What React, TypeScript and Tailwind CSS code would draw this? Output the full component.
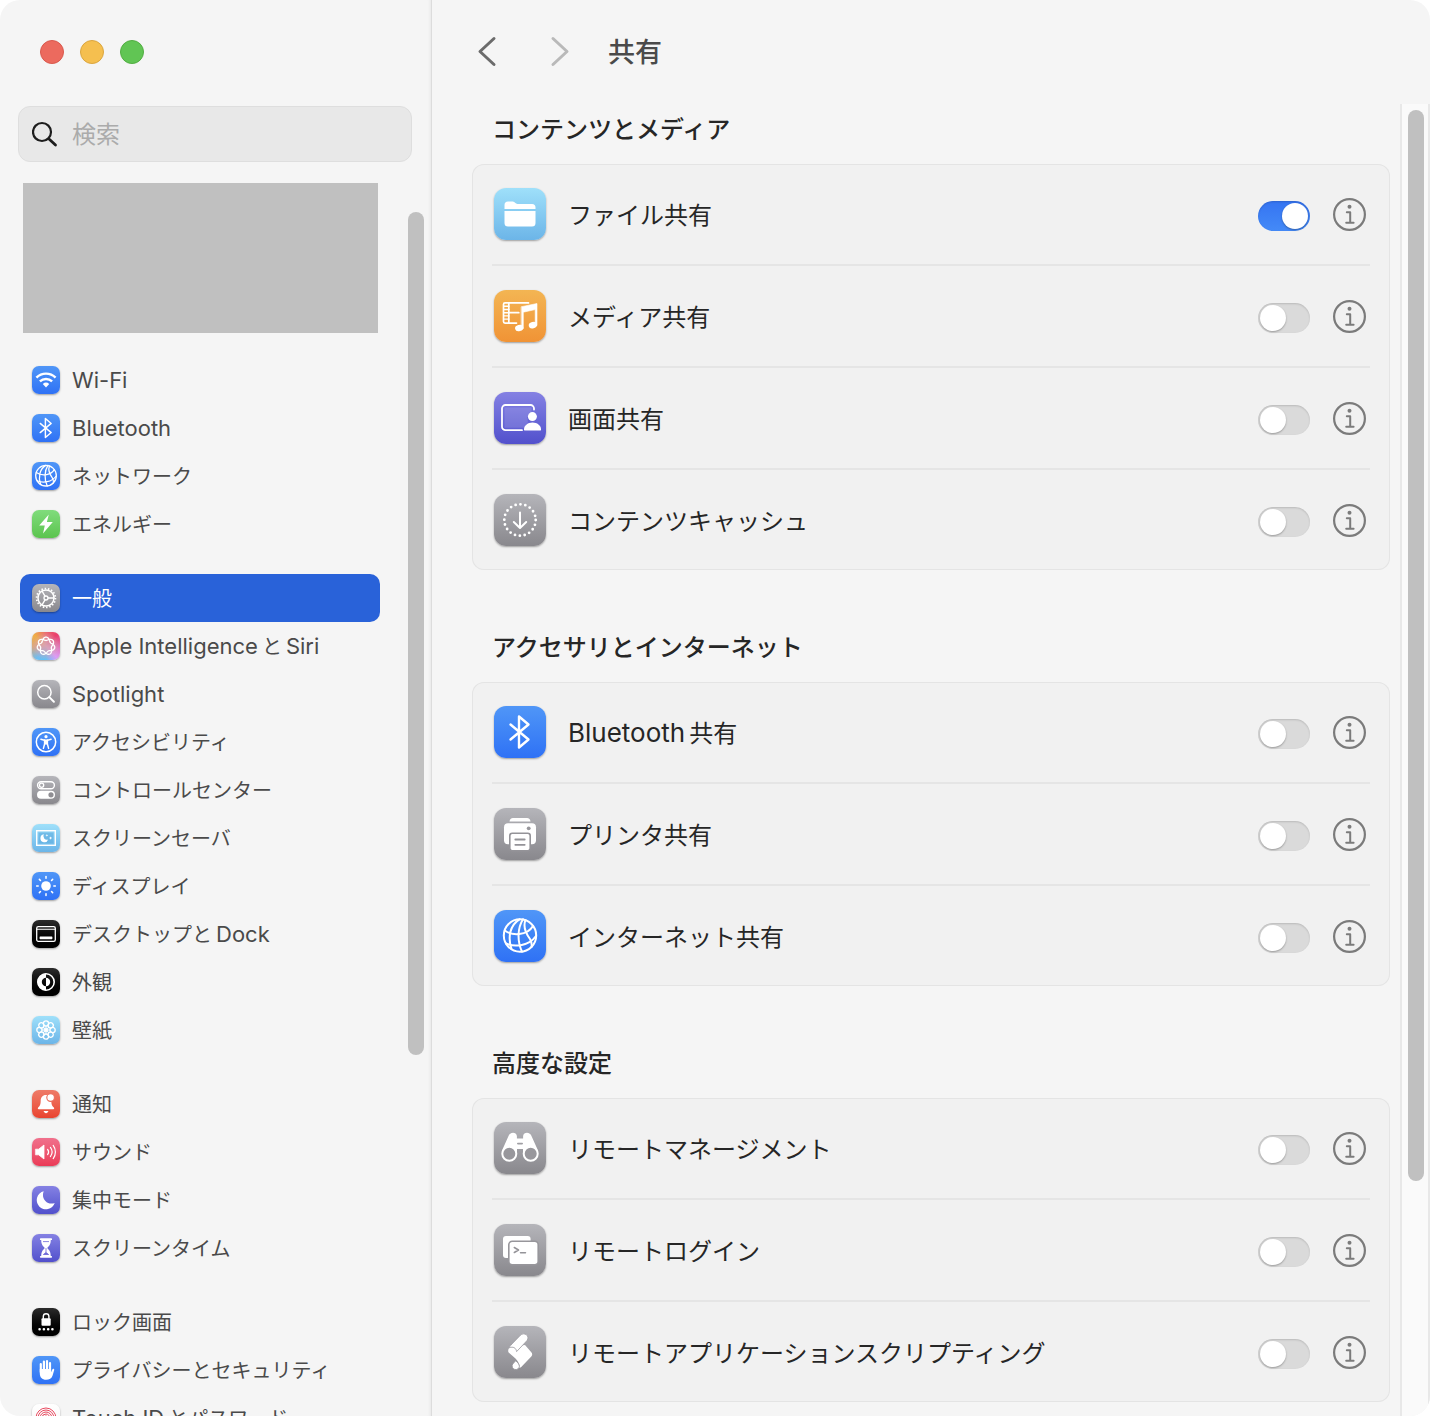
import type { ReactNode } from 'react'
import clsx from 'clsx'

const tones = {
  blue: 'bg-linear-to-b from-[#5096f7] to-[#2f71f5]',
  green: 'bg-linear-to-b from-[#80dc7c] to-[#5bc44e]',
  gray: 'bg-linear-to-b from-[#b5b5ba] to-[#89888d]',
  sky: 'bg-linear-to-b from-[#9fe0fa] to-[#6cb5e8]',
  black: 'bg-linear-to-b from-[#2c2c2c] to-[#000000]',
  red: 'bg-linear-to-b from-[#ee7b68] to-[#e9432f]',
  pink: 'bg-linear-to-b from-[#f0708c] to-[#ea3a57]',
  purple: 'bg-linear-to-b from-[#8581e3] to-[#5250cc]',
  orange: 'bg-linear-to-b from-[#f3b553] to-[#f09335]',
  white: 'bg-linear-to-b from-[#ffffff] to-[#f4f4f4]',
  siri: 'bg-[radial-gradient(circle,#d9a3b4_0%,#d9a3b4aa_35%,transparent_70%),conic-gradient(#ec6a70,#ea3f6c_12%,#e26fae_24%,#dc9cf5_38%,#62c2f7_50%,#6fbdf0_60%,#d9a880_74%,#efae45_87%,#ec6a70)]',
}

type Tone = keyof typeof tones

// Seven-lobed closed curve that crosses itself once per lobe
const siriLoop =
  Array.from({ length: 141 }, (_, i) => {
    const t = (i / 140) * Math.PI * 4
    const r = 7.2 + 1.7 * Math.cos(3.5 * t)
    const x = 14 + r * Math.sin(t)
    const y = 14 - r * Math.cos(t)
    return `${i === 0 ? 'M' : 'L'}${x.toFixed(2)} ${y.toFixed(2)}`
  }).join('') + 'Z'

const eighths = [0, 45, 90, 135, 180, 225, 270, 315]

const glyphs = {
  wifi: (
    <>
      <path d="M4.4 11.6a13.6 13.6 0 0 1 19.2 0M7.9 15.4a8.8 8.8 0 0 1 12.2 0" strokeWidth="2.4" strokeLinecap="butt" />
      <path d="M10.8 18a4.8 4.8 0 0 1 6.4 0L14 21.4z" fill="currentColor" stroke="none" />
    </>
  ),
  bolt: <path d="M16.8 4.4 7.2 15.6h5.6L11 23.6 20.8 12h-5.9z" fill="currentColor" stroke="none" />,
  gear: (
    <>
      <circle cx="14" cy="14" r="8" strokeWidth="1.5" />
      <circle cx="14" cy="14" r="9.4" strokeWidth="1.8" strokeDasharray="1.5 1.781" strokeLinecap="butt" />
      <circle cx="14" cy="14" r="2" strokeWidth="1.3" />
      <path d="M16 14h6M13 12.2 10 7M13 15.8 10 21" strokeWidth="1.4" />
    </>
  ),
  siri: <path d={siriLoop} strokeWidth="1.3" />,
  search: (
    <>
      <circle cx="12.4" cy="12.2" r="6.7" strokeWidth="1.5" />
      <path d="m17.3 17.1 4.6 4.6" strokeWidth="2" />
    </>
  ),
  accessibility: (
    <>
      <circle cx="14" cy="14" r="9.7" strokeWidth="1.5" />
      <circle cx="14" cy="8.7" r="1.6" fill="currentColor" stroke="none" />
      <path d="m8.9 11.3 3.5.9h3.2l3.5-.9" strokeWidth="1.4" />
      <path d="M12.6 12v4l-1.2 4.4M15.4 12v4l1.2 4.4" strokeWidth="1.5" />
      <path d="M12.3 12h3.4v4.4h-3.4z" fill="currentColor" stroke="none" />
    </>
  ),
  controls: (
    <>
      <rect x="5.6" y="5.8" width="16.8" height="7" rx="3.5" strokeWidth="1.4" />
      <circle cx="9.6" cy="9.3" r="2.1" strokeWidth="1.3" />
      <rect x="5" y="14.8" width="18" height="8" rx="4" fill="currentColor" stroke="none" />
      <circle cx="19" cy="18.8" r="2.6" fill="#8f8e93" stroke="none" />
    </>
  ),
  screensaver: (
    <>
      <rect x="4.7" y="6.7" width="18.6" height="14.6" strokeWidth="1.4" strokeLinejoin="miter" />
      <rect x="6.6" y="8.6" width="14.8" height="10.8" fill="#5aa9dc" stroke="none" opacity="0.55" />
      <path d="M11.8 10.3a4 4 0 1 0 4.4 5.3 3.7 3.7 0 0 1-4.4-5.3z" fill="currentColor" stroke="none" />
      <path d="m14.9 10 .4 1 1 .4-1 .4-.4 1-.4-1-1-.4 1-.4zM18.6 12.4l.5 1.2 1.2.5-1.2.5-.5 1.2-.5-1.2-1.2-.5 1.2-.5z" fill="currentColor" stroke="none" />
    </>
  ),
  sun: (
    <>
      <circle cx="14" cy="14" r="4.8" fill="currentColor" stroke="none" />
      {eighths.map((deg) => (
        <path key={deg} d="M14 6.2V4.6" strokeWidth="1.5" transform={`rotate(${deg} 14 14)`} />
      ))}
    </>
  ),
  dock: (
    <>
      <rect x="4.7" y="6.7" width="18.6" height="14.6" rx="1.6" strokeWidth="1.3" />
      <path d="M5 9.2h18" strokeWidth="1.1" />
      <rect x="7.6" y="16.4" width="12.8" height="2.8" rx="0.6" fill="currentColor" stroke="none" />
    </>
  ),
  appearance: (
    <>
      <circle cx="14" cy="14" r="8.2" strokeWidth="1.6" />
      <path d="M14 5.5a8.5 8.5 0 0 0 0 17v-4.3a4.2 4.2 0 0 1 0-8.4z" fill="currentColor" stroke="none" />
      <path d="M14 9.8a4.2 4.2 0 0 1 0 8.4z" fill="currentColor" stroke="none" />
    </>
  ),
  flower: (
    <>
      {eighths.map((deg) => (
        <circle key={deg} cx="14" cy="7.4" r="2.6" strokeWidth="1.3" transform={`rotate(${deg} 14 14)`} />
      ))}
      {eighths.map((deg) => (
        <path key={deg} d="M14 10.2v2.4" strokeWidth="1" transform={`rotate(${deg} 14 14)`} />
      ))}
      <circle cx="14" cy="14" r="2" fill="currentColor" stroke="none" />
    </>
  ),
  bell: (
    <>
      <path
        d="M14 5c-3.6 0-5.2 2.6-5.3 5.6-.1 4-.6 5.2-2.5 7-.7.7-.5 1.6.5 1.6h14.6c1 0 1.2-.9.5-1.6-1.9-1.8-2.4-3-2.5-7C19.2 7.6 17.6 5 14 5z"
        fill="currentColor"
        stroke="none"
      />
      <path d="M11.6 21h4.8c-.4 1.4-1.3 2.2-2.4 2.2S12 22.4 11.6 21z" fill="currentColor" stroke="none" />
      <circle cx="18.6" cy="7.6" r="3.8" fill="currentColor" stroke="#ec6b59" strokeWidth="1.1" />
    </>
  ),
  sound: (
    <>
      <path d="M3.8 11.2h2.8L12 7v14l-5.4-4.2H3.8z" fill="currentColor" strokeWidth="0.8" />
      <path d="M15.6 11.4a4.2 4.2 0 0 1 0 5.2M18.4 9.4a7.6 7.6 0 0 1 0 9.2M21.2 7.4a11 11 0 0 1 0 13.2" strokeWidth="1.2" />
    </>
  ),
  moon: <path d="M11.7 5.2a9.2 9.2 0 1 0 11 11.8C15.3 19.6 8.6 12.6 11.7 5.2z" fill="currentColor" stroke="none" />,
  hourglass: (
    <>
      <path d="M8.8 5.2h10.4M8.8 22.8h10.4" strokeWidth="1.8" />
      <path d="M9.2 5.5c0 4.5 1.2 6 3.6 8.5-2.4 2.5-3.6 4-3.6 8.5h9.6c0-4.5-1.2-6-3.6-8.5 2.4-2.5 3.6-4 3.6-8.5z" fill="currentColor" stroke="none" />
      <path d="M14 14.5v4l-2.6 2h5.2l-2.6-2M11.4 7.6h5.2" fill="#6a66d6" stroke="#6a66d6" strokeWidth="0.8" />
    </>
  ),
  lock: (
    <>
      <rect x="9.5" y="10.2" width="9.2" height="7.6" rx="1" fill="currentColor" stroke="none" />
      <path d="M11.3 10.5V8.6a2.8 2.8 0 0 1 5.6 0v1.9" strokeWidth="1.4" />
      <path d="M7.6 21.2h.01M11.9 21.2h.01M16.2 21.2h.01M20.4 21.2h.01" strokeWidth="2.6" />
    </>
  ),
  hand: (
    <>
      <path d="M8.8 8v8M11.9 5.6V14M15 5.2V14M18 7.2V15" strokeWidth="2.2" />
      <path d="M7.8 13h11.2l.3 3.2 1-2.6c.5-1.3 2.2-1 1.9.4l-1.6 5.4c-.9 2.9-3.3 4.3-6.5 4.3-3.9 0-6.3-2.3-6.3-6.5z" fill="currentColor" stroke="none" />
    </>
  ),
  fingerprint: (
    <g stroke="#e8495f" strokeWidth="1">
      {[10, 8, 6, 4, 2].map((r) => (
        <circle key={r} cx="14" cy="14" r={r} />
      ))}
    </g>
  ),
  bluetooth: <path d="M16.5 18.5 34.5 33.5 25 41.5V10.5L34.5 18.5 16.5 33.5" strokeWidth="2.4" />,
  globe: (
    <g strokeWidth="2">
      <circle cx="26" cy="25.5" r="16.2" />
      <path d="M25.5 9.3C16 15 13.5 27 17.5 39M29 9.3C23.5 18 23 31 28 41.7M31.5 10.2C29 16 31 22 36 29c1.6 2.8 2 5.4 1.5 8" />
      <path d="M10.8 20.5C18 26 33 26 39 16M12 33.5C21 37.5 35 36 42 26" />
    </g>
  ),
  folder: (
    <g fill="currentColor" stroke="none">
      <path d="M10.5 21V17a3.5 3.5 0 0 1 3.5-3.5h4.8c2.2 0 2.4 2.5 4.7 2.5H38a3.5 3.5 0 0 1 3.5 3.5V21z" />
      <path d="M10.5 23h31v12a3.5 3.5 0 0 1-3.5 3.5H14a3.5 3.5 0 0 1-3.5-3.5z" />
    </g>
  ),
  media: (
    <>
      <path d="M34.5 12.9H11a1.5 1.5 0 0 0-1.5 1.5v17.2a1.5 1.5 0 0 0 1.5 1.5h11.5M14.8 13v20M15 22.7h9.8" strokeWidth="1.7" />
      <path d="M10 16.3h5M10 19.5h5M10 22.7h5M10 25.9h5M10 29.1h5" strokeWidth="1.4" />
      <path d="M27.5 16.7 43 13.5v22h-1.8V19.6L29.3 22.2v16.3h-1.8z" fill="currentColor" strokeWidth="0.6" />
      <ellipse cx="25.2" cy="38" rx="4.2" ry="3.2" fill="currentColor" stroke="none" transform="rotate(-15 25.2 38)" />
      <ellipse cx="38.9" cy="35.2" rx="4.2" ry="3.2" fill="currentColor" stroke="none" transform="rotate(-15 38.9 35.2)" />
    </>
  ),
  screen: (
    <>
      <path d="M28 38.2H11.5A3.5 3.5 0 0 1 8 34.7V16.5A3.5 3.5 0 0 1 11.5 13h25a3.5 3.5 0 0 1 3.5 3.5v1" strokeWidth="1.8" />
      <path d="M10.5 15.5h27v4L33 25l1 5-4 5.7H10.5z" fill="#ffffff" opacity="0.12" stroke="none" />
      <circle cx="38.4" cy="24.6" r="4.5" fill="currentColor" stroke="none" />
      <path d="M30 37.4c0-4 4-6.8 8.5-6.8s8.5 2.8 8.5 6.8c0 .8-.4 1.2-1.2 1.2H31.2c-.8 0-1.2-.4-1.2-1.2z" fill="currentColor" stroke="none" />
    </>
  ),
  cache: (
    <>
      <circle cx="26" cy="26" r="15.7" strokeWidth="2.8" strokeDasharray="0 4.932" />
      <path d="M26 18.5v15M19.8 28l6.2 6 6.2-6" strokeWidth="2" />
    </>
  ),
  printer: (
    <>
      <path d="M15.5 13.6c.2-2.3 1.5-3.6 3.5-3.6h14c2 0 3.3 1.3 3.5 3.6z" fill="currentColor" stroke="none" />
      <rect x="10" y="15.2" width="32" height="21" rx="4" fill="currentColor" stroke="none" />
      <circle cx="34.7" cy="20.3" r="1.9" fill="#98979c" stroke="none" />
      <rect x="15.8" y="25.2" width="20.4" height="17.6" rx="2.5" fill="currentColor" stroke="#949398" strokeWidth="1.6" />
      <path d="M21.3 31.5h9.4M21.3 36.8h9.4" stroke="#949398" strokeWidth="1.8" />
    </>
  ),
  binoculars: (
    <>
      <path d="M8 28.5 14.3 14.5c1.5-4.8 8-4.8 8.6-.5v2.5h6.2V14c.6-4.3 7.1-4.3 8.6.5L44 28.5l-6 8-9-4V27h-6v5.5l-9 4z" fill="currentColor" stroke="none" />
      <circle cx="15.3" cy="31.8" r="7" fill="#98979c" strokeWidth="2" />
      <circle cx="36.7" cy="31.8" r="7" fill="#98979c" strokeWidth="2" />
      <path d="M23.8 21.6h4.4" stroke="#a09fa4" strokeWidth="1.6" />
    </>
  ),
  terminal: (
    <>
      <rect x="9" y="12" width="27.6" height="22" rx="3" fill="currentColor" stroke="none" />
      <rect x="14.8" y="17.3" width="29.4" height="23.4" rx="3.5" fill="currentColor" stroke="#97969b" strokeWidth="1.6" />
      <path d="m20.3 23.5 4.2 2.5-4.2 2.5M26.5 28.7h5" stroke="#949398" strokeWidth="1.5" />
    </>
  ),
  script: (
    <>
      <path d="M14.2 25c0-3 2.3-4.5 4.8-4.5L31 19l6.3 7.2c1.2 1.4 1.2 3 0 4.2L27 41.2l-1.8.8c.8-3.5-1-6.5-3.7-9.5l-6-5.2c-.9-.8-1.3-1.4-1.3-2.3z" fill="currentColor" stroke="none" />
      <path d="M17.4 18.6 26.2 9.4c4-4 10.2.6 6.8 5.2L22.6 25.6c-.4-3.7-3.6-5.4-7.2-3.8.2-1.2.9-2 2-3.2z" fill="currentColor" stroke="#a3a2a7" strokeWidth="0.9" />
      <path d="M18.3 38.5 21.6 34.8c2.3 1.6 3.8 3.7 3.8 5.6a3.7 3.7 0 1 1-7.1-1.9z" fill="currentColor" stroke="#97969b" strokeWidth="0.9" />
    </>
  ),
} satisfies Record<string, ReactNode>

type Glyph = keyof typeof glyphs

type SidebarItem = { label: string; glyph: Glyph; tone: Tone; viewBox?: string; active?: boolean }

const sidebarGroups: SidebarItem[][] = [
  [
    { label: 'Wi-Fi', glyph: 'wifi', tone: 'blue' },
    { label: 'Bluetooth', glyph: 'bluetooth', tone: 'blue', viewBox: '3 3 46 46' },
    { label: 'ネットワーク', glyph: 'globe', tone: 'blue', viewBox: '4 4 44 44' },
    { label: 'エネルギー', glyph: 'bolt', tone: 'green' },
  ],
  [
    { label: '一般', glyph: 'gear', tone: 'gray', active: true },
    { label: 'Apple IntelligenceとSiri', glyph: 'siri', tone: 'siri' },
    { label: 'Spotlight', glyph: 'search', tone: 'gray' },
    { label: 'アクセシビリティ', glyph: 'accessibility', tone: 'blue' },
    { label: 'コントロールセンター', glyph: 'controls', tone: 'gray' },
    { label: 'スクリーンセーバ', glyph: 'screensaver', tone: 'sky' },
    { label: 'ディスプレイ', glyph: 'sun', tone: 'blue' },
    { label: 'デスクトップとDock', glyph: 'dock', tone: 'black' },
    { label: '外観', glyph: 'appearance', tone: 'black' },
    { label: '壁紙', glyph: 'flower', tone: 'sky' },
  ],
  [
    { label: '通知', glyph: 'bell', tone: 'red' },
    { label: 'サウンド', glyph: 'sound', tone: 'pink' },
    { label: '集中モード', glyph: 'moon', tone: 'purple' },
    { label: 'スクリーンタイム', glyph: 'hourglass', tone: 'purple' },
  ],
  [
    { label: 'ロック画面', glyph: 'lock', tone: 'black' },
    { label: 'プライバシーとセキュリティ', glyph: 'hand', tone: 'blue' },
    { label: 'Touch IDとパスワード', glyph: 'fingerprint', tone: 'white' },
  ],
]

type Sharing = { id: string; label: string; glyph: Glyph; tone: Tone; on?: boolean }

const sections: { title: string; items: Sharing[] }[] = [
  {
    title: 'コンテンツとメディア',
    items: [
      { id: 'file', label: 'ファイル共有', glyph: 'folder', tone: 'sky', on: true },
      { id: 'media', label: 'メディア共有', glyph: 'media', tone: 'orange' },
      { id: 'screen', label: '画面共有', glyph: 'screen', tone: 'purple' },
      { id: 'cache', label: 'コンテンツキャッシュ', glyph: 'cache', tone: 'gray' },
    ],
  },
  {
    title: 'アクセサリとインターネット',
    items: [
      { id: 'bluetooth', label: 'Bluetooth共有', glyph: 'bluetooth', tone: 'blue' },
      { id: 'printer', label: 'プリンタ共有', glyph: 'printer', tone: 'gray' },
      { id: 'internet', label: 'インターネット共有', glyph: 'globe', tone: 'blue' },
    ],
  },
  {
    title: '高度な設定',
    items: [
      { id: 'management', label: 'リモートマネージメント', glyph: 'binoculars', tone: 'gray' },
      { id: 'login', label: 'リモートログイン', glyph: 'terminal', tone: 'gray' },
      { id: 'scripting', label: 'リモートアプリケーションスクリプティング', glyph: 'script', tone: 'gray' },
    ],
  },
]

function Tile({ glyph, tone, viewBox, className }: { glyph: Glyph; tone: Tone; viewBox: string; className: string }) {
  return (
    <span className={clsx('block shrink-0 overflow-hidden text-white shadow-[0_1px_2px_rgba(0,0,0,0.35)]', tones[tone], className)}>
      <svg
        className="block h-full w-full"
        viewBox={viewBox}
        fill="none"
        stroke="currentColor"
        strokeLinecap="round"
        strokeLinejoin="round"
        aria-hidden="true"
      >
        {glyphs[glyph]}
      </svg>
    </span>
  )
}

// Kana and kanji are set slightly smaller than Latin, with a thin gap where the scripts meet
function Label({ text, japanese }: { text: string; japanese: string }) {
  const parts = text.split(/([A-Za-z][A-Za-z -]*)/).filter(Boolean)
  return (
    <>
      {parts.map((part, index) => (
        <span key={index} className={clsx(!/^[A-Za-z]/.test(part) && japanese, index > 0 && 'ml-1')}>
          {part}
        </span>
      ))}
    </>
  )
}

function Scrollbar({ thumb, className }: { thumb: string; className: string }) {
  return (
    <div className={clsx('shrink-0 pt-1.5', className)} aria-hidden="true">
      <div className={clsx('w-4 rounded-full bg-[#c0c0c0]', thumb)} />
    </div>
  )
}

function Sidebar() {
  return (
    <aside className="flex w-[432px] shrink-0 flex-col border-r border-[#dcdcdc] shadow-[inset_-3px_0_3px_-2px_rgba(0,0,0,0.06)]">
      <div className="flex gap-4 px-10 pt-10">
        <button type="button" aria-label="閉じる" className="size-6 rounded-full border border-[#d9594d] bg-[#ec6a5e]" />
        <button type="button" aria-label="しまう" className="size-6 rounded-full border border-[#dba63f] bg-[#f5bf4f]" />
        <button type="button" aria-label="拡大" className="size-6 rounded-full border border-[#52ae42] bg-[#61c554]" />
      </div>

      <label className="mt-[42px] mr-[19px] ml-[18px] flex h-14 shrink-0 items-center gap-3 rounded-xl border border-[#dedede] bg-[#e8e8e8] px-[13px]">
        <svg className="size-7 shrink-0 text-[#1d1d1d]" viewBox="0 0 28 28" fill="none" stroke="currentColor" strokeLinecap="round" aria-hidden="true">
          <circle cx="10" cy="12" r="9" strokeWidth="2.2" />
          <path d="m17 19 6.5 6" strokeWidth="2.8" />
        </svg>
        <input
          type="search"
          aria-label="検索"
          placeholder="検索"
          className="min-w-0 flex-1 bg-transparent pt-0.5 text-2xl text-[#1d1d1d] outline-none placeholder:text-[#ababab]"
        />
      </label>

      <div className="flex min-h-0 flex-1">
        <nav className="min-w-0 flex-1 overflow-hidden pl-5">
          <div className="mt-[21px] mr-0.5 mb-[23px] ml-[3px] h-[150px] bg-[#c0c0c0]" />
          <div className="flex flex-col gap-[26px]">
            {sidebarGroups.map((group, index) => (
              <ul key={index}>
                {group.map((item) => (
                  <li key={item.label}>
                    <a
                      href="#"
                      aria-current={item.active ? 'page' : undefined}
                      className={clsx(
                        'flex h-12 items-center gap-3 rounded-[10px] px-3 text-[22px] whitespace-nowrap',
                        item.active ? 'bg-[#2962d9] text-white' : 'text-[#4a4a4a]',
                      )}
                    >
                      <Tile glyph={item.glyph} tone={item.tone} viewBox={item.viewBox ?? '0 0 28 28'} className="size-7 rounded-[7px]" />
                      <span>
                        <Label text={item.label} japanese="text-[20px]" />
                      </span>
                    </a>
                  </li>
                ))}
              </ul>
            ))}
          </div>
        </nav>
        <Scrollbar className="mt-11 mr-[7px] ml-7" thumb="h-[70%]" />
      </div>
    </aside>
  )
}

function SharingRow({ item }: { item: Sharing }) {
  return (
    <li className="group">
      <div className="flex h-[100px] items-center pr-6 pl-[22px]">
        <Tile glyph={item.glyph} tone={item.tone} viewBox="0 0 52 52" className="size-[52px] rounded-xl" />
        <label htmlFor={item.id} className="ml-[22px] flex-1 text-[26px] text-[#262626]">
          <Label text={item.label} japanese="text-[24px]" />
        </label>
        <input
          id={item.id}
          type="checkbox"
          role="switch"
          defaultChecked={item.on}
          className="mt-1 h-[30px] w-[52px] appearance-none rounded-full bg-[#dadada] p-0.5 shadow-[inset_0_1px_2px_rgba(0,0,0,0.15)] before:block before:size-[26px] before:rounded-full before:bg-white before:shadow-[0_1px_2px_rgba(0,0,0,0.3)] checked:bg-linear-to-b checked:from-[#3574f2] checked:to-[#448af7] checked:before:ml-[22px]"
        />
        <button type="button" aria-label={`${item.label}の情報`} className="ml-[23px] text-[#7b7b7b]">
          <svg className="size-[33px]" viewBox="0 0 33 33" fill="none" stroke="currentColor" strokeLinecap="round" strokeLinejoin="round">
            <circle cx="16.5" cy="16.5" r="15.4" strokeWidth="2.2" />
            <path d="M13.8 14.3h3.4v10.2M13.2 24.7h7.4" strokeWidth="2" />
            <circle cx="16.5" cy="8.8" r="2" fill="currentColor" stroke="none" />
          </svg>
        </button>
      </div>
      <div className="mx-5 h-0.5 bg-[#e5e5e5] group-last:hidden" />
    </li>
  )
}

export default function App() {
  return (
    <div lang="ja" className="h-screen bg-white font-['Inter','Noto_Sans_CJK_JP',sans-serif]">
      <div className="flex h-full overflow-hidden rounded-[20px] bg-[#f5f5f5]">
        <Sidebar />

        <main className="flex min-w-0 flex-1 flex-col">
          <header className="flex h-[104px] shrink-0 items-center pl-[42px]">
            <button type="button" aria-label="戻る" className="text-[#6b6b6b]">
              <svg className="h-8 w-6" viewBox="0 0 24 32" fill="none" stroke="currentColor" strokeWidth="3" strokeLinecap="round" strokeLinejoin="round">
                <path d="M20 2.5 6 15.5l14 13" />
              </svg>
            </button>
            <button type="button" aria-label="進む" disabled className="ml-12 text-[#b9b9b9]">
              <svg className="h-8 w-6" viewBox="0 0 24 32" fill="none" stroke="currentColor" strokeWidth="3" strokeLinecap="round" strokeLinejoin="round">
                <path d="m7 2.5 14 13-14 13" />
              </svg>
            </button>
            <h1 className="ml-[38px] pt-0.5 text-[27px] font-medium text-[#4a4a4a]">共有</h1>
          </header>

          <div className="flex min-h-0 flex-1">
            <div className="flex min-w-0 flex-1 flex-col gap-15 overflow-hidden pt-2 pr-2.5 pl-10">
              {sections.map((section) => (
                <section key={section.title}>
                  <h2 className="mb-4 pl-5 text-2xl leading-9 font-medium text-[#262626]">{section.title}</h2>
                  <ul className="rounded-xl bg-[#f1f1f1] shadow-[inset_0_0_0_1px_#e4e4e4]">
                    {section.items.map((item) => (
                      <SharingRow key={item.id} item={item} />
                    ))}
                  </ul>
                </section>
              ))}
            </div>
            <Scrollbar className="w-[30px] border-r-2 border-l-2 border-[#e8e8e8] bg-[#fafafa] pl-1.5" thumb="h-[82%]" />
          </div>
        </main>
      </div>
    </div>
  )
}
